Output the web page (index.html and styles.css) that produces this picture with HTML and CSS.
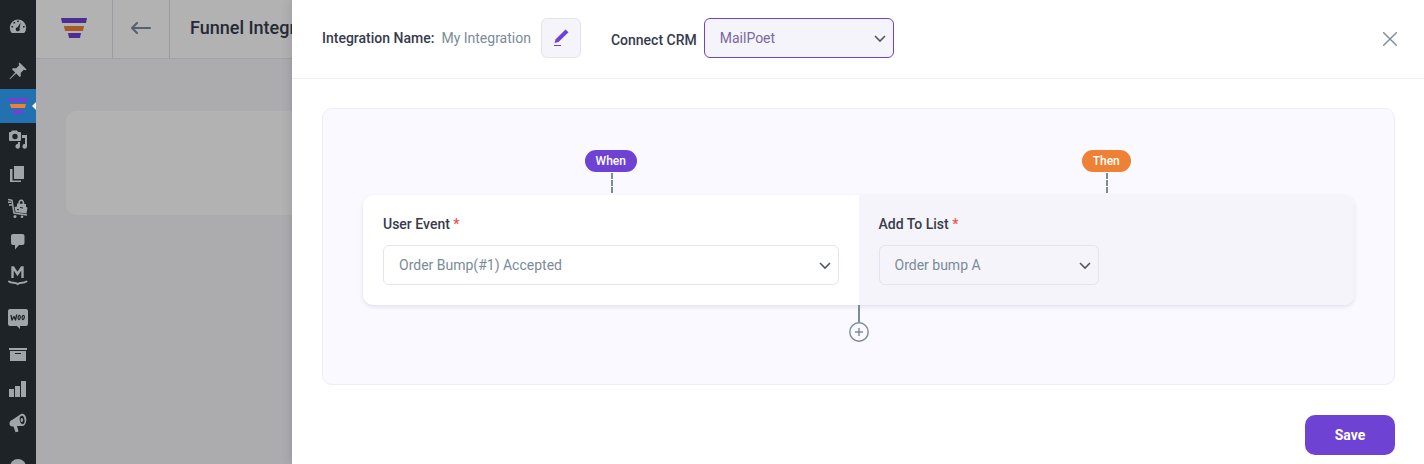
FILE: index.html
```html
<!DOCTYPE html>
<html lang="en">
<head>
    <meta charset="UTF-8">
    <meta name="viewport" content="width=device-width, initial-scale=1.0">
    <title>Funnel Integrations</title>
    <link rel="stylesheet" href="styles.css">
</head>
<body>

<!-- Admin menu -->
<nav class="admin-menu" aria-label="Admin menu">
    <a href="#" class="menu-item" aria-label="Dashboard">
        <svg width="20" height="20" viewBox="0 0 20 20"><path fill="currentColor" fill-rule="evenodd" d="M3.800 16A8.200 8.200 0 1 1 16.200 16ZM9.200 3.500h1.600v1.600H9.200ZM5.500 5h1.600v1.600H5.500ZM3.500 9h1.600v1.600H3.500ZM15 9h1.600v1.600H15ZM12.600 5.500 11.600 11.500a2 2 0 1 1-2-1.200Z"/></svg>
    </a>
    <a href="#" class="menu-item menu-item-first" aria-label="Posts">
        <svg width="20" height="20" viewBox="0 0 20 20"><path fill="currentColor" d="M11.500 1.500 18.600 8.600 17.200 9.300 15.800 8.800 12.700 12 12.800 15.200 11.700 16 8.200 12.600 2 18.200 1.500 17.700 7.200 11.600 4 8.300 4.800 7.200 8.200 7.300 11.200 4.200 10.700 2.800Z"/></svg>
    </a>
    <a href="#" class="menu-item active" aria-label="Funnels">
        <svg width="20" height="16" viewBox="0 0 20 16"><path fill="#6e42d3" d="M0 0H20L19 4H1Z"/><path fill="#ee8134" d="M2 6H18L17 10H3Z"/><path fill="#6e42d3" d="M4.500 12H15.500L14.500 16H5.500Z"/></svg>
    </a>
    <a href="#" class="menu-item" aria-label="Media">
        <svg width="20" height="20" viewBox="0 0 20 20"><path fill="currentColor" fill-rule="evenodd" d="M3 2l1-1.500h5L10 2h2a1 1 0 0 1 1 1v7a1 1 0 0 1-1 1H2a1 1 0 0 1-1-1V3a1 1 0 0 1 1-1ZM7 3.800a2.700 2.700 0 1 0 0 5.400 2.700 2.700 0 0 0 0-5.400Z"/><path fill="currentColor" d="M14 5h5v11.500a2.300 2.300 0 1 1-2-2.400V8h-3Z"/><path fill="currentColor" d="M10 12h2v4.500a2.300 2.300 0 1 1-2-2.400Z"/></svg>
    </a>
    <a href="#" class="menu-item" aria-label="Pages">
        <svg width="20" height="20" viewBox="0 0 20 20"><path fill="currentColor" d="M6 2h10v13H6ZM2 5h2.500v11.500H13V18H2Z"/></svg>
    </a>
    <a href="#" class="menu-item" aria-label="Carts">
        <svg width="20" height="20" viewBox="0 0 20 20"><path fill="none" stroke="currentColor" stroke-width="1.500" d="M0 1.500 4 2.300 6 15 19 17M0 4.200h3M1 7h3M11 6C11 1 15.500 1 15.500 6"/><path fill="currentColor" d="M6.500 9l2.500-.5V5.500l9 .5v3l1.500.5L18.500 15.500 7.500 14Z"/><circle cx="7" cy="18.500" r="1.500" fill="currentColor"/><circle cx="14" cy="18.700" r="1.300" fill="currentColor"/><path stroke="#1d2327" d="M9 11.500l2 .3M12 9.500l3 .5"/></svg>
    </a>
    <a href="#" class="menu-item" aria-label="Comments">
        <svg width="20" height="20" viewBox="0 0 20 20"><path fill="currentColor" d="M5 2h9.500a2 2 0 0 1 2 2v7a2 2 0 0 1-2 2H11l-4 4.500V13H5a2 2 0 0 1-2-2V4a2 2 0 0 1 2-2Z"/></svg>
    </a>
    <a href="#" class="menu-item" aria-label="MailPoet">
        <svg width="20" height="20" viewBox="0 0 20 20"><path fill="none" stroke="currentColor" stroke-width="2.400" d="M4.500 12V1.500h.8L9.500 8 13.700 1.500h.8V12"/><path fill="none" stroke="currentColor" stroke-width="2" stroke-linecap="round" d="M1 15.500c3 2 6 .2 8.700 2.500 2.700-2.300 5.700-.5 8.700-2.500"/></svg>
    </a>
    <a href="#" class="menu-item menu-item-woo" aria-label="WooCommerce">
        <svg width="20" height="20" viewBox="0 0 20 20"><path fill="currentColor" d="M2 0h16a2 2 0 0 1 2 2v13a2 2 0 0 1-2 2h-6v3l-3-3H2a2 2 0 0 1-2-2V2a2 2 0 0 1 2-2Z"/><path fill="none" stroke="#1d2327" stroke-width="1.300" stroke-linejoin="round" d="M3 6 4 11 6 7.500 7.500 11 8.700 5.500"/><ellipse cx="11.200" cy="8.500" rx="1.100" ry="2.200" fill="none" stroke="#1d2327" stroke-width="1.200" transform="rotate(10 11.200 8.500)"/><ellipse cx="15.200" cy="8.500" rx="1.100" ry="2.200" fill="none" stroke="#1d2327" stroke-width="1.200" transform="rotate(10 15.200 8.500)"/></svg>
    </a>
    <a href="#" class="menu-item" aria-label="Products">
        <svg width="20" height="20" viewBox="0 0 20 20"><path fill="currentColor" fill-rule="evenodd" d="M1 3h18v2H1ZM2 6h16v10H2ZM7 8v1h6V8Z"/></svg>
    </a>
    <a href="#" class="menu-item" aria-label="Analytics">
        <svg width="20" height="20" viewBox="0 0 20 20"><path fill="currentColor" d="M1 10h5v8H1ZM7 7h5v11H7ZM13 2h5v16h-5Z"/></svg>
    </a>
    <a href="#" class="menu-item" aria-label="Marketing">
        <svg width="20" height="20" viewBox="0 0 20 20"><path fill="currentColor" fill-rule="evenodd" d="M13 1c3-1 5.300 1.700 5.300 5.500s-2 6.800-4.300 6.500L9 13l1.500 5.500-3 .7L5.500 13.500C3 14 1.500 12.500 1.500 10.500S2.500 7.800 4 7ZM14 2.800c-1.800 0-2.600 2-2.300 4.200s1.600 4.300 3 4.200 2.100-2 1.900-4.200-1.200-4.200-2.600-4.200Z"/><ellipse cx="13.800" cy="7" rx="1.200" ry="2" fill="currentColor"/></svg>
    </a>
    <a href="#" class="menu-item menu-item-last" aria-label="Appearance">
        <svg width="20" height="20" viewBox="0 0 20 20"><circle cx="10" cy="10" r="8" fill="currentColor"/><path fill="#1d2327" d="M7 8h7v5H7Z"/></svg>
    </a>
</nav>

<!-- Page under the drawer -->
<main class="page">
    <header class="topbar">
        <a href="#" class="topbar-logo" aria-label="Home">
            <svg width="26" height="20" viewBox="0 0 26 20"><path fill="#6e42d3" d="M0 0H26L25 5H1Z"/><path fill="#ee8134" d="M3 8H23L22 13H4Z"/><path fill="#6e42d3" d="M7 15H20L19 20H8Z"/></svg>
        </a>
        <a href="#" class="topbar-back" aria-label="Back">
            <svg width="20" height="12" viewBox="0 0 20 12" fill="none" stroke="currentColor" stroke-width="2" stroke-linecap="round" stroke-linejoin="round"><path d="M19 6H1M6 1 1 6l5 5"/></svg>
        </a>
        <h1 class="topbar-title">Funnel Integrations</h1>
    </header>
    <div class="page-card"></div>
</main>
<div class="overlay"></div>

<!-- Integration drawer -->
<section class="drawer" role="dialog" aria-label="Integration">
    <header class="drawer-header">
        <span class="name-label">Integration Name:</span>
        <span class="name-value">My Integration</span>
        <button type="button" class="edit-button" aria-label="Edit name">
            <svg width="16" height="18" viewBox="0 0 16 18"><path fill="#6e42d3" d="M12.500.500 15.500 3.300 5.500 13 1.500 14 2.700 10.200Z"/><path fill="#6e42d3" d="M1 16h7v1H1Z"/></svg>
        </button>
        <label class="crm-label" for="crm">Connect CRM</label>
        <div class="select-box crm-select">
            <select id="crm">
                <option>MailPoet</option>
            </select>
            <svg class="chevron" width="12" height="8" viewBox="0 0 12 8"><path d="M1 1l5 5 5-5"/></svg>
        </div>
        <button type="button" class="close-button" aria-label="Close">
            <svg width="14" height="14" viewBox="0 0 14 14" fill="none" stroke="currentColor" stroke-width="1.400" stroke-linecap="round"><path d="M.7.7l12.600 12.600M13.300.7.7 13.300"/></svg>
        </button>
    </header>

    <form class="drawer-body">
        <div class="flow">
            <div class="flow-heads">
                <div class="flow-head"><span class="badge badge-when">When</span><span class="dashes"></span></div>
                <div class="flow-head"><span class="badge badge-then">Then</span><span class="dashes"></span></div>
            </div>
            <div class="flow-card">
                <div class="step">
                    <label for="event">User Event <span class="required">*</span></label>
                    <div class="select-box">
                        <select id="event">
                            <option>Order Bump(#1) Accepted</option>
                        </select>
                        <svg class="chevron" width="12" height="8" viewBox="0 0 12 8"><path d="M1 1l5 5 5-5"/></svg>
                    </div>
                </div>
                <div class="step step-then">
                    <label for="list">Add To List <span class="required">*</span></label>
                    <div class="select-box list-select">
                        <select id="list">
                            <option>Order bump A</option>
                        </select>
                        <svg class="chevron" width="12" height="8" viewBox="0 0 12 8"><path d="M1 1l5 5 5-5"/></svg>
                    </div>
                </div>
            </div>
            <div class="flow-add">
                <span class="line"></span>
                <button type="button" class="add-button" aria-label="Add step">
                    <svg width="20" height="20" viewBox="0 0 20 20" fill="none" stroke="currentColor" stroke-width="1.400"><circle cx="10" cy="10" r="9.200"/><path d="M10 6v8M6 10h8"/></svg>
                </button>
            </div>
        </div>
        <button type="submit" class="save-button">Save</button>
    </form>
</section>

</body>
</html>
```

FILE: styles.css
```css
* {
    box-sizing: border-box;
}
body {
    margin: 0;
    display: flex;
    height: 100vh;
    overflow: hidden;
    font-family: Roboto, "Liberation Sans", sans-serif;
    font-size: 14px;
    line-height: 20px;
    color: #363b4e;
    background: #f6f5fa;
}
button {
    padding: 0;
    border: none;
    background: none;
    font: inherit;
    cursor: pointer;
}
svg {
    display: block;
    flex: none;
}

/* Admin menu */
.admin-menu {
    width: 36px;
    flex: none;
    padding-top: 10px;
    background: #1d2327;
    overflow: hidden;
}
.menu-item {
    display: flex;
    align-items: center;
    justify-content: center;
    height: 34px;
    color: #a0a5aa;
}
.menu-item-first {
    margin: 10px 0 1px;
}
.menu-item-woo {
    margin: 9px 0 2px;
}
.menu-item-last {
    margin-top: 10px;
}
.menu-item.active {
    position: relative;
    background: #2271b1;
}
.menu-item.active::after {
    content: "";
    position: absolute;
    right: 0;
    top: 13px;
    border: 4px solid transparent;
    border-left: none;
    border-right-color: #f6f5fa;
}

/* Page */
.page {
    flex: 1;
    min-width: 0;
}
.topbar {
    display: flex;
    height: 59px;
    background: #fff;
    border-bottom: 1px solid #e5e7f0;
}
.topbar-logo,
.topbar-back {
    display: flex;
    align-items: center;
    justify-content: center;
    padding-bottom: 2px;
    border-right: 1px solid #dcdee9;
}
.topbar-logo {
    width: 77px;
}
.topbar-back {
    width: 57px;
    color: #7a8b9a;
}
.topbar-title {
    width: 102px;
    margin: 0 0 0 20px;
    overflow: hidden;
    font-size: 18px;
    line-height: 56px;
    font-weight: 500;
    white-space: nowrap;
}
.page-card {
    height: 104px;
    margin: 52px 30px 0;
    border-radius: 10px;
    background: #fff;
}
.overlay {
    position: absolute;
    top: 0;
    right: 0;
    bottom: 0;
    left: 36px;
    background: rgba(0, 0, 0, 0.3);
}

/* Drawer */
.drawer {
    position: absolute;
    top: 0;
    right: 0;
    bottom: 0;
    left: 292px;
    background: #fff;
    box-shadow: 0 0 10px rgba(50, 50, 80, 0.2);
    overflow: hidden;
}
.drawer-header {
    display: flex;
    align-items: center;
    height: 79px;
    padding: 0 27px 2px 30px;
    border-bottom: 1px solid #f0f0f3;
    white-space: nowrap;
}
.name-label,
.crm-label {
    font-weight: 500;
}
.name-value {
    margin: 0 10px 0 7px;
    color: #7a8b9a;
}
.edit-button {
    display: flex;
    align-items: center;
    justify-content: center;
    width: 40px;
    height: 40px;
    border: 1px solid #e3e3e8;
    border-radius: 6px;
    background: #f5f4fa;
}
.crm-label {
    margin: 0 7px 0 30px;
    padding-top: 4px;
}
.close-button {
    margin-left: auto;
    padding-top: 2px;
    color: #7a8b9a;
}

/* Selects */
.select-box {
    position: relative;
}
.select-box select {
    display: block;
    width: 100%;
    height: 40px;
    padding: 0 32px 0 15px;
    border: 1px solid #e4e4f1;
    border-radius: 6px;
    background: transparent;
    color: #7a8b9a;
    font: inherit;
    appearance: none;
}
.crm-select {
    width: 190px;
}
.crm-select select {
    border-color: #6e42d3;
    background: #f5f4fa;
    color: #7a68a0;
}
.list-select {
    width: 220px;
}
.chevron {
    position: absolute;
    top: 17px;
    right: 8px;
    fill: none;
    stroke: #50575e;
    stroke-width: 1.6;
    pointer-events: none;
}

/* Flow */
.drawer-body {
    padding: 29px 29px 0 30px;
}
.flow {
    padding: 41px 40px 42px;
    border: 1px solid #ededf4;
    border-radius: 10px;
    background: #faf9ff;
}
.flow-heads,
.flow-card {
    display: grid;
    grid-template-columns: 1fr 1fr;
}
.flow-head {
    display: flex;
    flex-direction: column;
    align-items: center;
    height: 45px;
}
.badge {
    padding: 0 11px;
    border-radius: 11px;
    font-size: 12px;
    line-height: 22px;
    font-weight: 500;
    color: #fff;
}
.badge-when {
    background: #6e42d3;
}
.badge-then {
    background: #ee8134;
}
.dashes {
    width: 2px;
    height: 20px;
    margin: 1px 0 0 2px;
    background: repeating-linear-gradient(#7a8b9a 0 6px, transparent 6px 7px);
}
.flow-card {
    border-radius: 10px;
    background: #fff;
    box-shadow: 0 2px 4px rgba(60, 50, 120, 0.12);
}
.step {
    padding: 20px;
}
.step label {
    display: block;
    height: 30px;
    line-height: 18px;
    font-weight: 500;
}
.step-then {
    border-radius: 0 10px 10px 0;
    background: #f5f4fa;
}
.required {
    color: #f0524f;
}
.flow-add {
    display: flex;
    flex-direction: column;
    align-items: center;
    color: #7a8b9a;
}
.line {
    width: 2px;
    height: 17px;
    background: #7a8b9a;
}
.add-button {
    color: #7a8b9a;
}
.save-button {
    display: block;
    width: 90px;
    height: 40px;
    margin: 30px 0 0 auto;
    border-radius: 10px;
    background: #6e42d3;
    color: #fff;
    font-weight: 700;
}
```
